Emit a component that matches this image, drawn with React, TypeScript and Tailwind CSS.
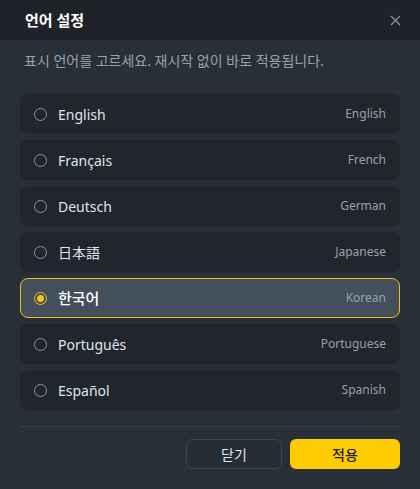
const languages = [
  { code: "en", label: "English", english: "English" },
  { code: "fr", label: "Français", english: "French" },
  { code: "de", label: "Deutsch", english: "German" },
  { code: "ja", label: "日本語", english: "Japanese" },
  { code: "ko", label: "한국어", english: "Korean" },
  { code: "pt", label: "Português", english: "Portuguese" },
  { code: "es", label: "Español", english: "Spanish" },
];

const selected = "ko";

export default function App() {
  return (
    <div
      className="h-[489px] w-[420px] overflow-hidden bg-[#282f37] text-white"
      style={{ fontFamily: '"Noto Sans", "Noto Sans CJK KR", sans-serif' }}
    >
      <div className="flex h-10 items-center justify-between bg-[#1f2329] pl-[25px] pr-[19px]">
        <h1 className="text-[15px] font-bold text-white">언어 설정</h1>
        <button className="text-[#8b939c]" aria-label="닫기">
          <svg width="11" height="11" viewBox="0 0 11 11" fill="none" stroke="currentColor" strokeWidth="1.2">
            <path d="M1 1l9 9M10 1l-9 9" />
          </svg>
        </button>
      </div>

      <div className="px-5 pt-[11px]">
        <p className="pl-1 text-[14px] leading-5 text-[#98a2ad]">
          표시 언어를 고르세요. 재시작 없이 바로 적용됩니다.
        </p>

        <ul className="mt-[23px] flex flex-col gap-[6px]">
          {languages.map((lang) => {
            const active = lang.code === selected;
            return (
              <li
                key={lang.code}
                className={
                  active
                    ? "flex h-10 items-center rounded-lg border border-[#f2bd1d] bg-[#434f5b] px-[13px]"
                    : "flex h-10 items-center rounded-lg border border-transparent bg-[#21252c] px-[13px]"
                }
              >
                <span
                  className={
                    active
                      ? "flex h-[13px] w-[13px] items-center justify-center rounded-full border-[1.5px] border-[#f5c518]"
                      : "h-[13px] w-[13px] rounded-full border-[1.5px] border-[#8d959e]"
                  }
                >
                  {active ? <span className="h-[7px] w-[7px] rounded-full bg-[#f5c518]" /> : null}
                </span>
                <span
                  className={
                    active
                      ? "ml-[11px] text-[15px] font-medium text-white"
                      : "ml-[11px] text-[14px] text-[#dfe5ec]"
                  }
                >
                  {lang.label}
                </span>
                <span className="ml-auto text-[12px] text-[#98a2ad]">{lang.english}</span>
              </li>
            );
          })}
        </ul>

        <div className="mt-4 h-px bg-[#39424c]" />

        <div className="mt-3 flex justify-end gap-2">
          <button className="h-[30px] w-24 rounded-md border border-[#3b4550] bg-[#262d35] text-[14px] text-[#dfe5ec]">
            닫기
          </button>
          <button className="h-[30px] w-[110px] rounded-md bg-[#ffcc00] text-[14px] font-medium text-[#1b1f24]">
            적용
          </button>
        </div>
      </div>
    </div>
  );
}
